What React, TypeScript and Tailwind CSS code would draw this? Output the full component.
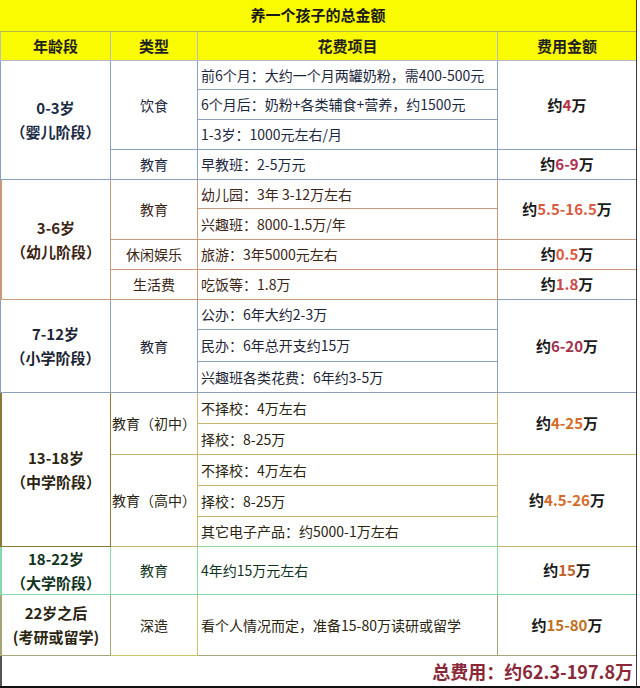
import React from 'react';

const font = "font-['Noto_Sans_CJK_SC','Noto_Sans',sans-serif]";

const Amt = ({ n, color }: { n: string; color: string }) => (
  <span className="text-[15px] font-bold text-[#1a1a1a]">
    约<span className={color}>{n}</span>万
  </span>
);

const Age = ({ a, b, color }: { a: string; b: string; color: string }) => (
  <div className={`flex flex-col items-center text-[15px] font-bold leading-6 ${color}`}>
    <span>{a}</span>
    <span>{b}</span>
  </div>
);

const App = () => {
  return (
    <div className={`w-[640px] h-[688px] bg-white overflow-hidden ${font}`}>
      <div className="w-[637px] border-r border-[#3a3a3a]">
        <div className="grid grid-cols-[111px_87px_300px_138px] grid-rows-[32px_29px_29px_30px_30px_30px_29px_31px_30px_30px_30px_32px_31px_31px_31px_31px_31px_30px_48px_61px_30px] text-[14px] text-[#1f1f1f]">
          {/* title */}
          <div className="col-span-4 flex items-center justify-center bg-[#fafa00] border-b border-[#b9b84a] text-[15px] font-bold text-[#1a1a1a]">
            养一个孩子的总金额
          </div>

          {/* header */}
          <div className="flex items-center justify-center bg-[#fafa00] border-r border-b border-[#b8bcc8] border-l text-[15px] font-bold">年龄段</div>
          <div className="flex items-center justify-center bg-[#fafa00] border-r border-b border-[#b8bcc8] text-[15px] font-bold">类型</div>
          <div className="flex items-center justify-center bg-[#fafa00] border-r border-b border-[#b8bcc8] text-[15px] font-bold">花费项目</div>
          <div className="flex items-center justify-center bg-[#fafa00] border-b border-[#b8bcc8] text-[15px] font-bold">费用金额</div>

          {/* 0-3 */}
          <div className="row-span-4 flex items-center justify-center border-l border-r border-b border-[#8da0bd]">
            <Age a="0-3岁" b="（婴儿阶段）" color="text-[#1c2b45]" />
          </div>
          <div className="row-span-3 flex items-center justify-center border-r border-b border-[#8da0bd] text-[#1c2840]">饮食</div>
          <div className="flex items-center pl-[3px] border-r border-b border-[#8da0bd] text-[#1c2840] whitespace-nowrap">前6个月：大约一个月两罐奶粉，需400-500元</div>
          <div className="row-span-3 flex items-center justify-center border-b border-[#8da0bd]">
            <Amt n="4" color="text-[#b8323f]" />
          </div>
          <div className="flex items-center pl-[3px] border-r border-b border-[#8da0bd] text-[#1c2840] whitespace-nowrap">6个月后：奶粉+各类辅食+营养，约1500元</div>
          <div className="flex items-center pl-[3px] border-r border-b border-[#8da0bd] text-[#1c2840] whitespace-nowrap">1-3岁：1000元左右/月</div>
          <div className="flex items-center justify-center border-r border-b border-[#8da0bd] text-[#1c2840]">教育</div>
          <div className="flex items-center pl-[3px] border-r border-b border-[#8da0bd] text-[#1c2840]">早教班：2-5万元</div>
          <div className="flex items-center justify-center border-b border-[#8da0bd]">
            <Amt n="6-9" color="text-[#b02e4e]" />
          </div>

          {/* 3-6 */}
          <div className="row-span-4 flex items-center justify-center border-l-2 border-r border-b border-[#c99a7a]">
            <Age a="3-6岁" b="（幼儿阶段）" color="text-[#3b2414]" />
          </div>
          <div className="row-span-2 flex items-center justify-center border-r border-b border-[#c99a7a] text-[#3b2414]">教育</div>
          <div className="flex items-center pl-[3px] border-r border-b border-[#c99a7a] text-[#3b2414]">幼儿园：3年 3-12万左右</div>
          <div className="row-span-2 flex items-center justify-center border-b border-[#c99a7a]">
            <Amt n="5.5-16.5" color="text-[#dc5a44]" />
          </div>
          <div className="flex items-center pl-[3px] border-r border-b border-[#c99a7a] text-[#3b2414]">兴趣班：8000-1.5万/年</div>
          <div className="flex items-center justify-center border-r border-b border-[#c99a7a] text-[#3b2414]">休闲娱乐</div>
          <div className="flex items-center pl-[3px] border-r border-b border-[#c99a7a] text-[#3b2414]">旅游：3年5000元左右</div>
          <div className="flex items-center justify-center border-b border-[#c99a7a]">
            <Amt n="0.5" color="text-[#dc5a40]" />
          </div>
          <div className="flex items-center justify-center border-r border-b border-[#c99a7a] text-[#3b2414]">生活费</div>
          <div className="flex items-center pl-[3px] border-r border-b border-[#c99a7a] text-[#3b2414]">吃饭等：1.8万</div>
          <div className="flex items-center justify-center border-b border-[#8da0bd]">
            <Amt n="1.8" color="text-[#cc4a48]" />
          </div>

          {/* 7-12 */}
          <div className="row-span-3 flex items-center justify-center border-l border-r border-b border-[#8da0bd]">
            <Age a="7-12岁" b="（小学阶段）" color="text-[#1c2535]" />
          </div>
          <div className="row-span-3 flex items-center justify-center border-r border-b border-[#8da0bd] text-[#1c2535]">教育</div>
          <div className="flex items-center pl-[3px] border-r border-b border-[#8da0bd] text-[#1c2535]">公办：6年大约2-3万</div>
          <div className="row-span-3 flex items-center justify-center border-b border-[#8da0bd]">
            <Amt n="6-20" color="text-[#a3304e]" />
          </div>
          <div className="flex items-center pl-[3px] border-r border-b border-[#8da0bd] text-[#1c2535]">民办：6年总开支约15万</div>
          <div className="flex items-center pl-[3px] border-r border-b border-[#8da0bd] text-[#1c2535]">兴趣班各类花费：6年约3-5万</div>

          {/* 13-18 */}
          <div className="row-span-5 flex items-center justify-center border-l-2 border-r border-b border-[#8a7a3a]">
            <Age a="13-18岁" b="（中学阶段）" color="text-[#2a2410]" />
          </div>
          <div className="row-span-2 flex items-center justify-center border-r border-b border-[#c9b66c] text-[#2a2410] whitespace-nowrap">教育（初中）</div>
          <div className="flex items-center pl-[3px] border-r border-b border-[#c9b66c] text-[#2a2410]">不择校：4万左右</div>
          <div className="row-span-2 flex items-center justify-center border-b border-[#c9b66c]">
            <Amt n="4-25" color="text-[#d66a28]" />
          </div>
          <div className="flex items-center pl-[3px] border-r border-b border-[#c9b66c] text-[#2a2410]">择校：8-25万</div>
          <div className="row-span-3 flex items-center justify-center border-r border-b border-[#c9b66c] text-[#2a2410] whitespace-nowrap">教育（高中）</div>
          <div className="flex items-center pl-[3px] border-r border-b border-[#c9b66c] text-[#2a2410]">不择校：4万左右</div>
          <div className="row-span-3 flex items-center justify-center border-b border-[#c9b66c]">
            <Amt n="4.5-26" color="text-[#d66a28]" />
          </div>
          <div className="flex items-center pl-[3px] border-r border-b border-[#c9b66c] text-[#2a2410]">择校：8-25万</div>
          <div className="flex items-center pl-[3px] border-r border-b border-[#8fd4a4] text-[#2a2410]">其它电子产品：约5000-1万左右</div>

          {/* 18-22 */}
          <div className="flex items-center justify-center border-l-2 border-r border-b border-[#86d9a8]">
            <Age a="18-22岁" b="（大学阶段）" color="text-[#0f3320]" />
          </div>
          <div className="flex items-center justify-center border-r border-b border-[#86d9a8] text-[#0f3320]">教育</div>
          <div className="flex items-center pl-[3px] border-r border-b border-[#86d9a8] text-[#0f3320]">4年约15万元左右</div>
          <div className="flex items-center justify-center border-b border-[#86d9a8]">
            <Amt n="15" color="text-[#c0602a]" />
          </div>

          {/* 22+ */}
          <div className="flex items-center justify-center border-l-2 border-r border-b border-[#a8a47a]">
            <Age a="22岁之后" b="(考研或留学)" color="text-[#2a2410]" />
          </div>
          <div className="flex items-center justify-center border-r border-b border-[#c8c46a] text-[#2a2410]">深造</div>
          <div className="flex items-center pl-[3px] border-r border-b border-[#a8a47a] text-[#2a2410] whitespace-nowrap">看个人情况而定，准备15-80万读研或留学</div>
          <div className="flex items-center justify-center border-b border-[#a8a47a]">
            <Amt n="15-80" color="text-[#c0701e]" />
          </div>

          {/* total */}
          <div className="col-span-4 flex items-center justify-end pr-[3px] border-l-2 border-[#555] text-[18px] font-bold text-[#8a2838]">
            总费用：约62.3-197.8万
          </div>
        </div>
      </div>
      <div className="h-[2px] w-[640px] bg-[#111]" />
    </div>
  );
};

export default App;
